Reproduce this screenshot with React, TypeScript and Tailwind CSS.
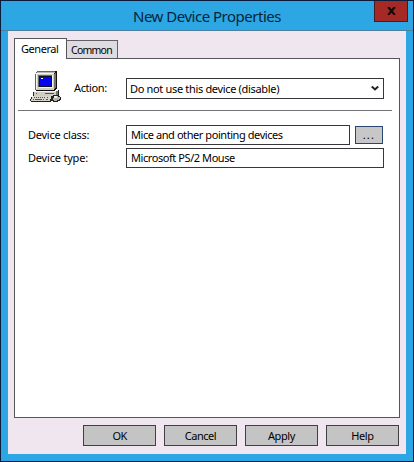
import React from "react";

function ComputerIcon() {
  return (
    <svg width="32" height="33" viewBox="0 0 32 33" shapeRendering="crispEdges" aria-hidden="true">
      <path d="M8 1h19v18h-1v1h-1v1H6v-1h1V3h1z" fill="#111" />
      <path d="M7 1h18v1H7zM6 2h1v2H6zM5 4h1v16H5z" fill="#66655f" />
      <path d="M25 3h1v15h-1v1h-1V4h1z" fill="#77756a" />
      <path d="M7 2h18v1H7z" fill="#bab8b0" />
      <path d="M6 4h18v16H6z" fill="#cfcdc4" />
      <path d="M6 3h18v1H6zM6 4h1v15H6z" fill="#f4f3ec" />
      <path d="M8 5h14v1H8zM8 6h1v11H8z" fill="#6c6a65" />
      <path d="M9 6h13v11H9z" fill="#111126" />
      <path d="M10 7h11v9H10z" fill="#0404f0" />
      <path d="M11 8h2v1h-2z" fill="#fff" />
      <path d="M22 5h1v13H9v-1h13z" fill="#f5f4ec" />
      <path d="M4 21h24v-1h1v7H3v-5h1z" fill="#222" />
      <path d="M4 21h22v5H4z" fill="#cfcdc4" />
      <path d="M4 21h22v1H4z" fill="#f4f3ec" />
      <path d="M26 21h2v4h-2z" fill="#77756a" />
      <path d="M15 23h9v1h-9z" fill="#555" />
      <path d="M6 23h1v1H6z" fill="#138b35" />
      <path d="M3 26h19v1h1v2h-1v2h-1v1H1v-1H0v-2h1v-2h2z" fill="#222" />
      <path d="M3 26h18v3h-1v2H1v-2h1v-2h1z" fill="#d7d5cc" />
      <path d="M4 27h1v1H4zm2 0h1v1H6zm2 0h1v1H8zm2 0h1v1h-1zm2 0h1v1h-1zm2 0h1v1h-1zm3 0h1v1h-1zM3 29h1v1H3zm2 0h7v1H5zm8 0h1v1h-1zm3 0h2v1h-2z" fill="#55534d" />
      <path d="M23 25h5v1h2v1h1v3h-1v1h-2v1h-5v-1h-1v-4h1z" fill="#222" />
      <path d="M24 26h4v1h2v2h-1v1h-2v1h-3v-1h-1v-2h1z" fill="#b5b3aa" />
      <path d="M24 26h3v2h-3z" fill="#efeee7" />
    </svg>
  );
}

function FooterButton({ label, tracking }: { label: string; tracking: string }) {
  return (
    <button className="flex h-[21px] w-[73px] items-center justify-center border border-[#404044] bg-[#c5c4c5]">
      <span className={tracking}>{label}</span>
    </button>
  );
}

export default function App() {
  return (
    <main className="flex h-[462px] w-[414px] flex-col overflow-hidden border border-[#0b1b3b] bg-[#2ca7e4] font-['Noto_Sans','Open_Sans',sans-serif] text-[11px] leading-[14px] whitespace-nowrap text-black">
      <header className="flex h-[30px] shrink-0 border-b border-[#4e7f9f]">
        <div className="w-[132px]" />
        <h1 className="w-[241px] pt-1 text-[15px] leading-[22px] tracking-[-0.49px] text-[#06243b]">New Device Properties</h1>
        <button aria-label="Close" className="flex h-[21px] w-[34px] items-center justify-center border border-t-0 border-[#461c22] bg-[#a52a25]">
          <svg width="9" height="8" viewBox="0 0 9 8" aria-hidden="true"><path d="M1.2 0 7.8 8M7.8 0 1.2 8" stroke="#16090b" strokeWidth="2.2" /></svg>
        </button>
      </header>
      <section className="ml-[7px] h-[423px] w-[398px] bg-[#f0e6ef] pt-[7px] pl-[6px]">
        <nav className="flex h-[20px] w-[386px] items-end">
          <button className="relative z-10 -mb-px h-[21px] w-[53px] shrink-0 self-start border border-b-0 border-[#55555c] bg-white text-left"><span className="-mt-px block pl-[6px] tracking-[-0.45px]">General</span></button>
          <button className="h-[18px] w-[51px] shrink-0 border border-b-0 border-l-0 border-[#62616a] bg-[#dfdce1] text-left"><span className="block pl-1 text-[10.5px] tracking-[-0.75px]">Common</span></button>
        </nav>
        <div className="h-[360px] w-[386px] border border-[#55555c] bg-white">
          <div className="flex h-[51px] pt-[11px] pl-[15px]">
            <ComputerIcon />
            <span className="ml-[12px] w-[52px] pt-[11px] tracking-[-0.4px]">Action:</span>
            <button className="mt-[8px] flex h-[21px] w-[258px] items-center justify-between border border-[#37373b] bg-white pr-1 pl-[3px]">
              <span className="tracking-[-0.33px]">Do not use this device (disable)</span>
              <svg width="8" height="7" viewBox="0 0 8 7"><path d="m.8 1.5 3.2 3 3.2-3" fill="none" stroke="#222" strokeWidth="2" /></svg>
            </button>
          </div>
          <div className="ml-[3px] h-px w-[374px] bg-[#747478]" />
          <div className="mt-[14px] flex h-[20px] pl-[13px]">
            <span className="w-[98px] pt-[3px] tracking-[-0.25px]">Device class:</span>
            <div className="flex w-[224px] items-center border border-[#37373b] pl-[4px]"><span className="tracking-[-0.43px]">Mice and other pointing devices</span></div>
            <button className="mt-px ml-[5px] h-[18px] w-[28px] border border-[#294471] bg-[#c8c7c8] leading-[14px]"><span className="tracking-[1.3px]">...</span></button>
          </div>
          <div className="mt-[3px] flex h-[20px] pl-[13px]">
            <span className="w-[98px] pt-[3px] tracking-[-0.2px]">Device type:</span>
            <div className="flex w-[258px] items-center border border-[#37373b] pl-[4px]"><span className="tracking-[-0.43px]">Microsoft PS/2 Mouse</span></div>
          </div>
        </div>
        <footer className="mt-[7px] ml-[69px] flex gap-2">
          <FooterButton label="OK" tracking="tracking-[-0.7px]" />
          <FooterButton label="Cancel" tracking="tracking-[-0.45px]" />
          <FooterButton label="Apply" tracking="tracking-[-0.4px]" />
          <FooterButton label="Help" tracking="tracking-[-0.4px]" />
        </footer>
      </section>
    </main>
  );
}
